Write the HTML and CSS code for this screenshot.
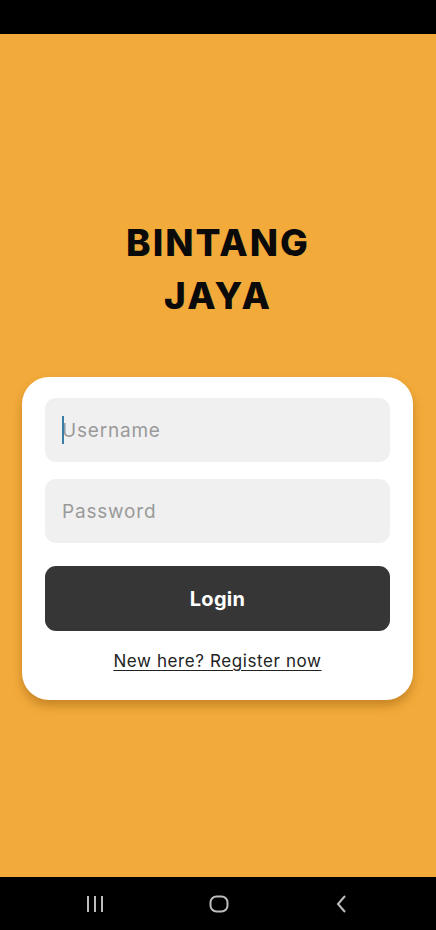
FILE: index.html
```html
<!DOCTYPE html>
<html lang="id">
<head>
<meta charset="utf-8">
<title>Bintang Jaya</title>
<link rel="stylesheet" href="styles.css">
</head>
<body>
<div class="screen">
  <div class="status-bar"></div>
  <main class="main">
    <h1 class="title">BINTANG<br>JAYA</h1>
    <form class="card">
      <div class="field"><span class="caret"></span><span class="placeholder">Username</span></div>
      <div class="field"><span class="placeholder">Password</span></div>
      <button type="button" class="login">Login</button>
      <a class="register" href="#">New here? Register now</a>
    </form>
  </main>
  <nav class="nav-bar">
    <svg class="nav-icon" width="20" height="18" viewBox="0 0 20 18"><g stroke="#bdbdbd" stroke-width="2"><line x1="3" y1="1" x2="3" y2="17"/><line x1="10" y1="1" x2="10" y2="17"/><line x1="17" y1="1" x2="17" y2="17"/></g></svg>
    <svg class="nav-icon" width="20" height="18" viewBox="0 0 20 18"><rect x="1.5" y="1.5" width="17" height="15" rx="6" fill="none" stroke="#bdbdbd" stroke-width="2"/></svg>
    <svg class="nav-icon" width="20" height="18" viewBox="0 0 20 18"><polyline points="13,1 6,9 13,17" fill="none" stroke="#bdbdbd" stroke-width="2"/></svg>
  </nav>
</div>
</body>
</html>
```
FILE: styles.css
```css
html, body {
  margin: 0;
  padding: 0;
  background: #000;
}
.screen {
  width: 436px;
  height: 930px;
  display: flex;
  flex-direction: column;
  font-family: "Inter", "Open Sans", sans-serif;
}
.status-bar {
  height: 34px;
  background: #000;
  flex: none;
}
.main {
  flex: 1;
  background: #f2aa3a;
  display: flex;
  flex-direction: column;
  align-items: stretch;
  padding-top: 182px;
}
.title {
  margin: 0;
  text-align: center;
  font-size: 37px;
  line-height: 53px;
  font-weight: 800;
  letter-spacing: 2px;
  color: #0a0a0a;
}
.card {
  margin: 55px 23px 0 22px;
  background: #fff;
  border-radius: 27px;
  padding: 21px 23px 27px;
  display: flex;
  flex-direction: column;
  box-shadow: 0 6px 10px rgba(120, 70, 0, 0.35);
}
.field {
  height: 64px;
  background: #f0f0f0;
  border-radius: 11px;
  display: flex;
  align-items: center;
  padding-left: 17px;
  position: relative;
}
.field + .field {
  margin-top: 17px;
}
.caret {
  position: absolute;
  left: 17px;
  top: 18px;
  width: 2px;
  height: 28px;
  background: #3a7ca8;
}
.placeholder {
  font-size: 19px;
  color: #9a9a9a;
  letter-spacing: 0.8px;
}
.login {
  margin-top: 23px;
  height: 65px;
  border: none;
  border-radius: 11px;
  background: #363636;
  color: #fff;
  font-family: inherit;
  font-size: 20px;
  font-weight: 700;
  letter-spacing: 0.3px;
}
.register {
  margin-top: 18px;
  text-align: center;
  font-size: 17px;
  line-height: 24px;
  color: #222;
  letter-spacing: 0.6px;
  text-decoration: underline;
  text-underline-offset: 3px;
}
.nav-bar {
  height: 53px;
  background: #000;
  flex: none;
  display: flex;
  align-items: center;
  justify-content: space-between;
  padding: 0 84px 0 85px;
}
.nav-icon {
  display: block;
}
```
